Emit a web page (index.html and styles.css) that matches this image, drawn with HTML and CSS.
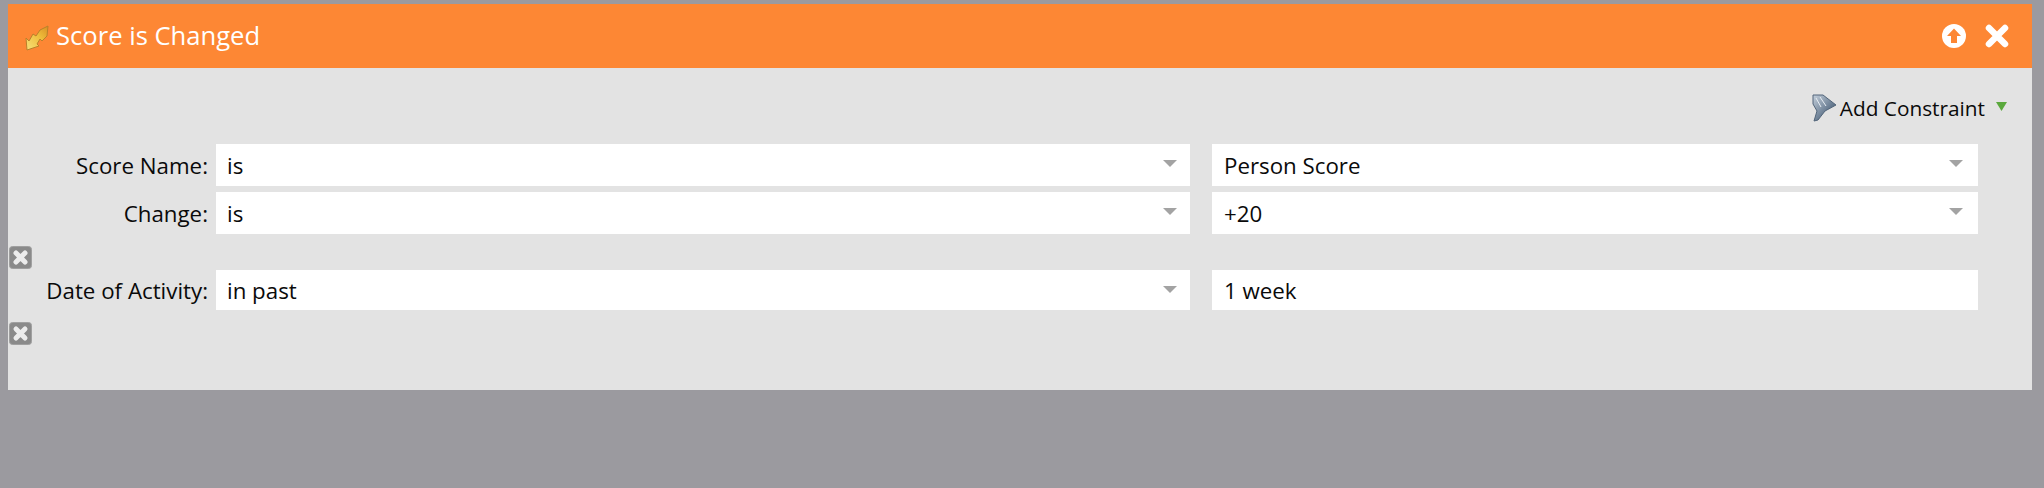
FILE: index.html
```html
<!DOCTYPE html>
<html>
<head>
    <title>Score is Changed</title>
    <link rel="stylesheet" href="styles.css">
</head>
<body>
    <div class="panel">
        <div class="panel-header">
            <svg class="bolt" width="24" height="26" viewBox="0 0 24 26">
                <defs>
                    <linearGradient id="boltFill" x1="0" y1="1" x2="1" y2="0">
                        <stop offset="0" stop-color="#f7e27a"/>
                        <stop offset="0.6" stop-color="#eebc3a"/>
                        <stop offset="1" stop-color="#d98f24"/>
                    </linearGradient>
                </defs>
                <path d="M23 1 L22 11 L17 16 L15 14 L12 19 L14 21 L2 25 L1 13 L4 16 L8 9 L11 11 L15 5 Z" fill="url(#boltFill)" stroke="#b9812a" stroke-width="1"/>
            </svg>
            <span class="panel-title">Score is Changed</span>
            <div class="panel-actions">
                <svg width="26" height="26" viewBox="0 0 26 26">
                    <circle cx="13" cy="13" r="12" fill="#fff"/>
                    <path d="M13 5.5 L20 13 L16 13 L16 20 L10 20 L10 13 L6 13 Z" fill="#fd8734"/>
                </svg>
                <svg width="24" height="24" viewBox="0 0 24 24">
                    <path d="M4 4 L20 20 M20 4 L4 20" stroke="#fff" stroke-width="6.5" stroke-linecap="round"/>
                </svg>
            </div>
        </div>
        <div class="panel-body">
            <div class="toolbar">
                <svg width="26" height="28" viewBox="0 0 26 28">
                    <defs>
                        <linearGradient id="funnelFill" x1="0" y1="0" x2="1" y2="1">
                            <stop offset="0" stop-color="#c5d0dc"/>
                            <stop offset="0.55" stop-color="#6f8297"/>
                            <stop offset="1" stop-color="#2f4258"/>
                        </linearGradient>
                    </defs>
                    <path d="M2 1 L12 1 L25 11 L14 17 L7 26 L3 27 L6 17 L2 10 Z" fill="url(#funnelFill)" stroke="#52657a" stroke-width="1"/>
                    <path d="M5 4 L10 13 M9 3 L15 12" stroke="#e8eef4" stroke-width="1"/>
                </svg>
                <span class="add-label">Add Constraint</span>
                <svg class="add-arrow" width="11" height="9" viewBox="0 0 11 9">
                    <path d="M0 0 H11 L5.5 9 Z" fill="#5aa83c"/>
                </svg>
            </div>

            <div class="row">
                <label class="row-label">Score Name:</label>
                <div class="field">is<span class="caret"></span></div>
                <div class="field field-wide">Person Score<span class="caret"></span></div>
            </div>
            <div class="row">
                <label class="row-label">Change:</label>
                <div class="field">is<span class="caret"></span></div>
                <div class="field field-wide">+20<span class="caret"></span></div>
            </div>
            <div class="remove">
                <svg width="23" height="23" viewBox="0 0 23 23">
                    <rect x="0.5" y="0.5" width="22" height="22" rx="3" fill="#8a8a8a" stroke="#a0a0a0"/>
                    <path d="M7 7 L16 16 M16 7 L7 16" stroke="#ececec" stroke-width="5" stroke-linecap="round"/>
                </svg>
            </div>

            <div class="row row-short">
                <label class="row-label">Date of Activity:</label>
                <div class="field">in past<span class="caret"></span></div>
                <div class="field field-wide">1 week</div>
            </div>
            <div class="remove">
                <svg width="23" height="23" viewBox="0 0 23 23">
                    <rect x="0.5" y="0.5" width="22" height="22" rx="3" fill="#8a8a8a" stroke="#a0a0a0"/>
                    <path d="M7 7 L16 16 M16 7 L7 16" stroke="#ececec" stroke-width="5" stroke-linecap="round"/>
                </svg>
            </div>
        </div>
    </div>
</body>
</html>
```

FILE: styles.css
```css
* {
    margin: 0;
    padding: 0;
    box-sizing: border-box;
}

body {
    font-family: 'Open Sans', sans-serif;
    background-color: #9b9a9f;
    color: #0a0a0a;
    height: 488px;
    padding: 4px 12px 0 8px;
    overflow: hidden;
}

.panel {
    background: #e3e3e3;
    height: 386px;
}

.panel-header {
    background: #fd8734;
    height: 64px;
    display: flex;
    align-items: center;
    padding: 0 23px 0 17px;
    color: #fff;
}

.bolt {
    margin-top: 3px;
}

.panel-title {
    font-size: 25.6px;
    margin-left: 7px;
    margin-top: -1px;
}

.panel-actions {
    margin-left: auto;
    margin-top: -16px;
    display: flex;
    align-items: center;
    gap: 18px;
    transform: translateY(8px);
}

.panel-body {
    padding-top: 26px;
}

.toolbar {
    height: 50px;
    display: flex;
    align-items: flex-start;
    padding-right: 25px;
    justify-content: flex-end;
    font-size: 20.8px;
    line-height: 28px;
}

.add-label {
    margin-left: 3px;
}

.add-arrow {
    margin-left: 11px;
    margin-top: 8px;
}

.row {
    display: grid;
    grid-template-columns: 208px 974px 766px;
    grid-template-rows: 42px;
    margin-bottom: 6px;
    font-size: 22.3px;
    line-height: 43px;
}

.row-short {
    grid-template-rows: 40px;
    line-height: 42px;
    margin-bottom: 0;
    margin-top: 1px;
}

.row-label {
    text-align: right;
    padding-right: 8px;
}

.field {
    position: relative;
    background: #fff;
    padding-left: 11px;
}

.field-wide {
    margin-left: 22px;
    width: 766px;
    padding-left: 12px;
}

.caret {
    position: absolute;
    right: 13px;
    top: 16px;
    width: 0;
    height: 0;
    border-left: 7px solid transparent;
    border-right: 7px solid transparent;
    border-top: 7px solid #a3a3a3;
}

.field-wide .caret {
    right: 15px;
}

.remove {
    height: 23px;
    margin: 12px 0 0 1px;
    display: flex;
}
```
